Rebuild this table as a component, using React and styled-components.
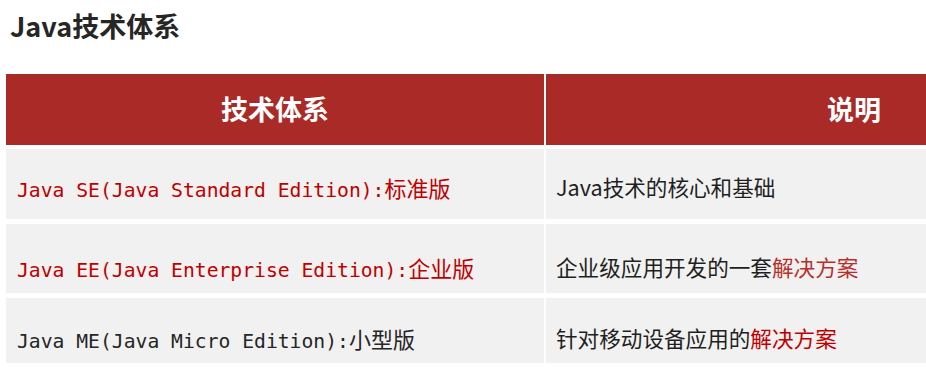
import React from 'react';
import styled, { createGlobalStyle } from 'styled-components';

const GlobalStyle = createGlobalStyle`
    html, body {
        margin: 0;
        padding: 0;
        background: #ffffff;
        overflow: hidden;
    }
    body {
        font-family: "Noto Sans CJK SC", "Liberation Sans", sans-serif;
    }
`

const Page = styled.div`
    width: 926px;
    height: 369px;
    padding-top: 12px;
    box-sizing: border-box;
`

const Title = styled.h1`
    margin: 0 0 0 10px;
    height: 28px;
    font-size: 27px;
    line-height: 28px;
    font-weight: 700;
    color: #262626;
    font-family: "Noto Sans CJK SC", sans-serif;
`

const Table = styled.div`
    margin: 34px 0 0 6px;
    display: flex;
    flex-direction: column;
`

const Row = styled.div`
    display: grid;
    grid-template-columns: 538px 1fr;
    column-gap: 2px;
    height: ${props => props.$height}px;
    margin-top: ${props => props.$gap || 0}px;
`

const HeadCell = styled.div`
    background-color: #a92a27;
    color: #ffffff;
    font-size: 27px;
    font-weight: 700;
    display: flex;
    align-items: center;
    justify-content: ${props => props.$align === 'right' ? 'flex-end' : 'center'};
    padding-right: ${props => props.$align === 'right' ? '45px' : '0'};
    padding-bottom: 2px;
    font-family: "Noto Sans CJK SC", sans-serif;
`

const Cell = styled.div`
    background-color: #f1f1f1;
    box-sizing: border-box;
    padding: ${props => props.$top}px 0 0 ${props => props.$left}px;
    white-space: nowrap;
`

const Code = styled.span`
    font-family: "DejaVu Sans Mono", "Noto Sans CJK SC", monospace;
    font-size: 19.7px;
    line-height: 22px;
    color: ${props => props.$red ? '#c00000' : '#262626'};
`

const Cjk = styled.span`
    font-family: "Noto Sans CJK SC", sans-serif;
    font-size: 22px;
`

const Desc = styled.span`
    font-family: "Noto Sans CJK SC", "Liberation Sans", sans-serif;
    font-size: 21.6px;
    line-height: 22px;
    color: #1f1f1f;
`

const Mark = styled.span`
    color: ${props => props.$soft ? '#b8302b' : '#c00000'};
`

const rows = [
    {
        height: 70, gap: 4, top: 27, red: true,
        code: 'Java SE(Java Standard Edition):', label: '标准版',
        desc: 'Java技术的核心和基础',
    },
    {
        height: 69, gap: 5, top: 32, red: true,
        code: 'Java EE(Java Enterprise Edition):', label: '企业版',
        desc: '企业级应用开发的一套', mark: '解决方案', soft: true,
    },
    {
        height: 65, gap: 5, top: 29, red: false,
        code: 'Java ME(Java Micro Edition):', label: '小型版',
        desc: '针对移动设备应用的', mark: '解决方案',
    },
];

export default function App() {
    return <Page>
        <GlobalStyle />
        <Title>Java技术体系</Title>
        <Table>
            <Row $height={71}>
                <HeadCell>技术体系</HeadCell>
                <HeadCell $align='right'>说明</HeadCell>
            </Row>
            {rows.map(r => (
                <Row key={r.code} $height={r.height} $gap={r.gap}>
                    <Cell $top={r.top} $left={11}>
                        <Code $red={r.red}>{r.code}<Cjk>{r.label}</Cjk></Code>
                    </Cell>
                    <Cell $top={r.top} $left={10}>
                        <Desc>{r.desc}{r.mark && <Mark $soft={r.soft}>{r.mark}</Mark>}</Desc>
                    </Cell>
                </Row>
            ))}
        </Table>
    </Page>
}
